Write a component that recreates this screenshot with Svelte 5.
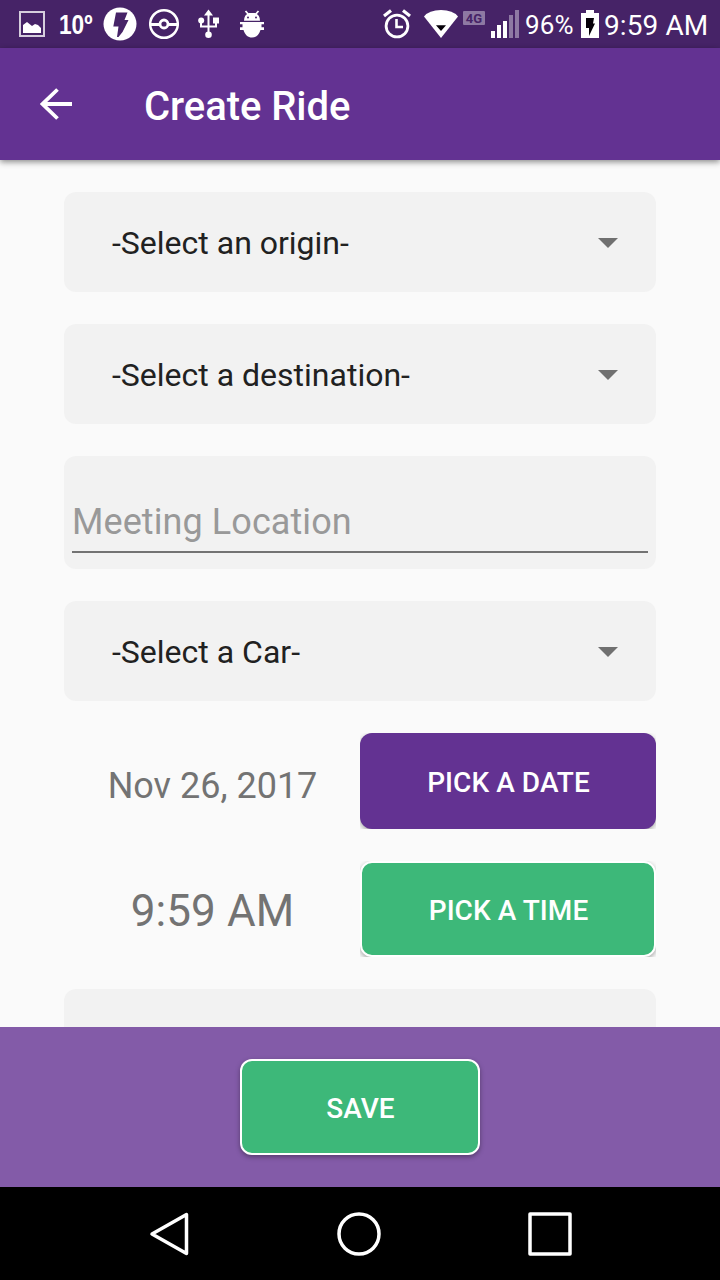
<script>
  const selects = ['-Select an origin-', '-Select a destination-'];
</script>

{#snippet dropdown(label)}
  <div class="field select">
    <span>{label}</span>
    <svg width="20" height="10" viewBox="0 0 20 10"><path d="M0 0h20L10 10z" fill="#707070" /></svg>
  </div>
{/snippet}

<div class="screen">
  <header class="status">
    <svg width="26" height="48" viewBox="19 0 26 48">
      <rect x="20" y="12" width="24" height="24" fill="none" stroke="#d6cedd" stroke-width="2" />
      <path d="M23 33V25l4-3 5 4 3-2 3 1 3 3v5z" fill="#fff" />
    </svg>
    <span class="temp">10º</span>
    <svg class="bolt" width="34" height="48" viewBox="103 0 34 48">
      <circle cx="120" cy="24" r="16.500" fill="#fff" />
      <path d="M116 12.500h11.500l-3 7.500h4l-6 12-4 5h-1.500l1.500-10.500h-5.200z" fill="#462367" />
    </svg>
    <svg class="ball" width="30" height="48" viewBox="149 0 30 48" fill="none" stroke="#fff">
      <circle cx="164" cy="24" r="13.800" stroke-width="2.500" />
      <circle cx="164" cy="24" r="4" stroke-width="2.800" />
      <path d="M150 24.500h10m8 0h10" stroke-width="2.800" />
    </svg>
    <svg class="usb" width="22" height="48" viewBox="198 0 22 48">
      <path d="M208.500 13v21M201 21v5.500h15V22" fill="none" stroke="#fff" stroke-width="2" />
      <path d="M204 15.500l4.500-6 4.500 6z" fill="#fff" />
      <circle cx="201.200" cy="20.500" r="3" fill="#fff" />
      <circle cx="208.500" cy="34.700" r="3.300" fill="#fff" />
      <path d="M213 17.500h6v6h-6z" fill="#fff" />
    </svg>
    <svg class="bug" width="24" height="48" viewBox="240 0 24 48">
      <path d="M244 20.800q0-6 5-7.800h6q5 1.800 5 7.800zM240 22h24v2.300H240zM242.500 24h19v3.500h-19zM240 27.200h24v2.800h-3.500C259 35 256 37.500 252 37.500s-7-2.500-8.500-7.500H240z" fill="#fff" />
      <path d="M245.500 11l3.500 4m9.500-4-3.500 4" stroke="#fff" stroke-width="1.800" />
      <circle cx="248" cy="17.500" r="1" fill="#462367" /><circle cx="256" cy="17.500" r="1" fill="#462367" />
    </svg>
    <i class="gap"></i>
    <svg width="28" height="48" viewBox="383 0 28 48" fill="none" stroke="#fff">
      <circle cx="397" cy="26" r="10.900" stroke-width="2.800" />
      <path d="M396.500 19v8h6.500" stroke-width="2.600" />
      <path d="M384 16l7-5.500m19 5.500-7-5.500" stroke-width="3.200" />
    </svg>
    <svg class="wifi" width="34" height="48" viewBox="424 0 34 48">
      <path d="M424 16.500Q429 10 441 10t17 6.500L441 38z" fill="#fff" />
      <path d="M436 25.300h10l-5 5.700z" fill="#050008" />
    </svg>
    <span class="network">4G</span>
    <svg class="signal" width="29" height="48" viewBox="491 0 29 48">
      <path d="M491 31h4v7h-4zM497 25h4v13h-4zM503 21h4v17h-4z" fill="#fff" />
      <path d="M509 15h4v23h-4zM515 10h4v28h-4z" fill="#8e79a3" />
    </svg>
    <span class="percent">96%</span>
    <svg class="battery" width="18" height="48" viewBox="581 0 18 48">
      <path d="M586 10h8v3h5v25h-18V13h5z" fill="#fff" />
      <path d="M586 18h8l-1 5.500h2L589 36v-8h-3z" fill="#050008" />
    </svg>
    <span class="clock">9:59 AM</span>
  </header>

  <div class="toolbar">
    <svg width="32" height="32" viewBox="0 0 32 32"><path d="M17.500 1.500 2.500 16l15 14.500M2 16h30" fill="none" stroke="#fff" stroke-width="3.800" /></svg>
    <h1>Create Ride</h1>
  </div>

  <main>
    {#each selects as label}
      {@render dropdown(label)}
    {/each}
    <div class="field meeting"><div class="input">Meeting Location</div></div>
    {@render dropdown('-Select a Car-')}
    <div class="row date">
      <span>Nov 26, 2017</span>
      <div class="clip"><button class="purple">PICK A DATE</button></div>
    </div>
    <div class="row time">
      <span>9:59 AM</span>
      <div class="clip"><button class="green">PICK A TIME</button></div>
    </div>
    <div class="field next"></div>
  </main>

  <footer><button class="green save">SAVE</button></footer>

  <nav>
    <svg width="720" height="93" viewBox="0 0 720 93" fill="none" stroke="#fff" stroke-width="3.500" stroke-linejoin="round">
      <path d="M186.500 27.500v39L152 47z" />
      <circle cx="359" cy="47" r="20" />
      <path d="M530 27h40v40h-40z" />
    </svg>
  </nav>
</div>

<style>
  :global(body) { margin: 0; }
  * { box-sizing: border-box; }
  svg { display: block; flex: none; }
  .screen {
    width: 720px; height: 1280px; overflow: hidden;
    display: flex; flex-direction: column;
    background: #fafafa; font-family: Roboto, sans-serif;
  }
  .status {
    height: 48px; flex: none; display: flex; align-items: center;
    padding: 0 12px 0 19px; background: #462367; color: #fff; white-space: nowrap;
  }
  .temp {
    width: 34px; margin-left: 14px; font: bold 27px/48px "Liberation Sans", sans-serif;
    transform: scaleX(.84); transform-origin: left; padding-top: 2px;
  }
  .bolt { margin-left: 10px; }
  .ball { margin-left: 12px; }
  .usb { margin-left: 19px; }
  .bug { margin-left: 20px; }
  .gap { flex: 1; }
  .wifi { margin-left: 13px; }
  .network {
    width: 22px; height: 14px; margin: 0 6px 12px 5px; border-radius: 1px;
    background: #8e79a3; color: #462367; font-size: 13px; font-weight: 700;
    line-height: 15px; text-align: center;
  }
  .percent { width: 50px; margin-left: 5px; font-size: 26px; line-height: 50px; padding-top: 2px; letter-spacing: .2px; }
  .battery { margin-left: 6px; }
  .clock { width: 104px; margin-left: 5px; font-size: 28px; line-height: 50px; padding-top: 4px; letter-spacing: .1px; }
  .toolbar {
    height: 112px; flex: none; display: flex; align-items: center;
    padding-left: 40px; background: #633292; color: #fff;
    box-shadow: 0 2px 6px rgba(0, 0, 0, .45); z-index: 1;
  }
  h1 { margin: 6px 0 0 72px; font-size: 40px; font-weight: 500; line-height: 48px; letter-spacing: -.05px; }
  main {
    height: 867px; flex: none; overflow: hidden; padding: 32px 64px 0;
    display: flex; flex-direction: column;
  }
  .field { flex: none; margin-bottom: 32px; border-radius: 12px; background: #f2f2f2; }
  .select {
    height: 100px; display: flex; align-items: center; justify-content: space-between;
    padding: 0 38px 0 48px; color: #212121; font-size: 32px; line-height: 38px;
  }
  .select span { padding-top: 2px; }
  .select svg { margin-top: 2px; }
  .meeting { height: 113px; padding: 42px 8px 0; }
  .input { height: 55px; border-bottom: 2px solid #737373; color: #999; font-size: 36px; line-height: 48px; letter-spacing: .08px; }
  .row { flex: none; display: grid; grid-template-columns: 296px 296px; color: #737373; }
  .row span { text-align: center; padding-left: 1px; }
  .date { height: 96px; font-size: 36px; line-height: 106px; }
  .time { height: 96px; margin: 32px 0; font-size: 44px; line-height: 100px; letter-spacing: .1px; }
  .clip { height: 96px; overflow: hidden; }
  .next { height: 113px; }
  button {
    display: block; width: 100%; height: 96px; padding: 4px 0 0 1px; border: 0; border-radius: 12px;
    color: #fff; font: 500 28px/34px Roboto, sans-serif; letter-spacing: .06px; box-shadow: 0 2px 5px rgba(0, 0, 0, .35);
  }
  .purple { background: #633292; }
  .green { border: 2px solid #fff; background: #3db879; }
  footer { height: 160px; flex: none; display: flex; justify-content: center; padding-top: 32px; background: #835ba8; }
  .save { width: 240px; }
  nav { height: 93px; background: #000; }
</style>
